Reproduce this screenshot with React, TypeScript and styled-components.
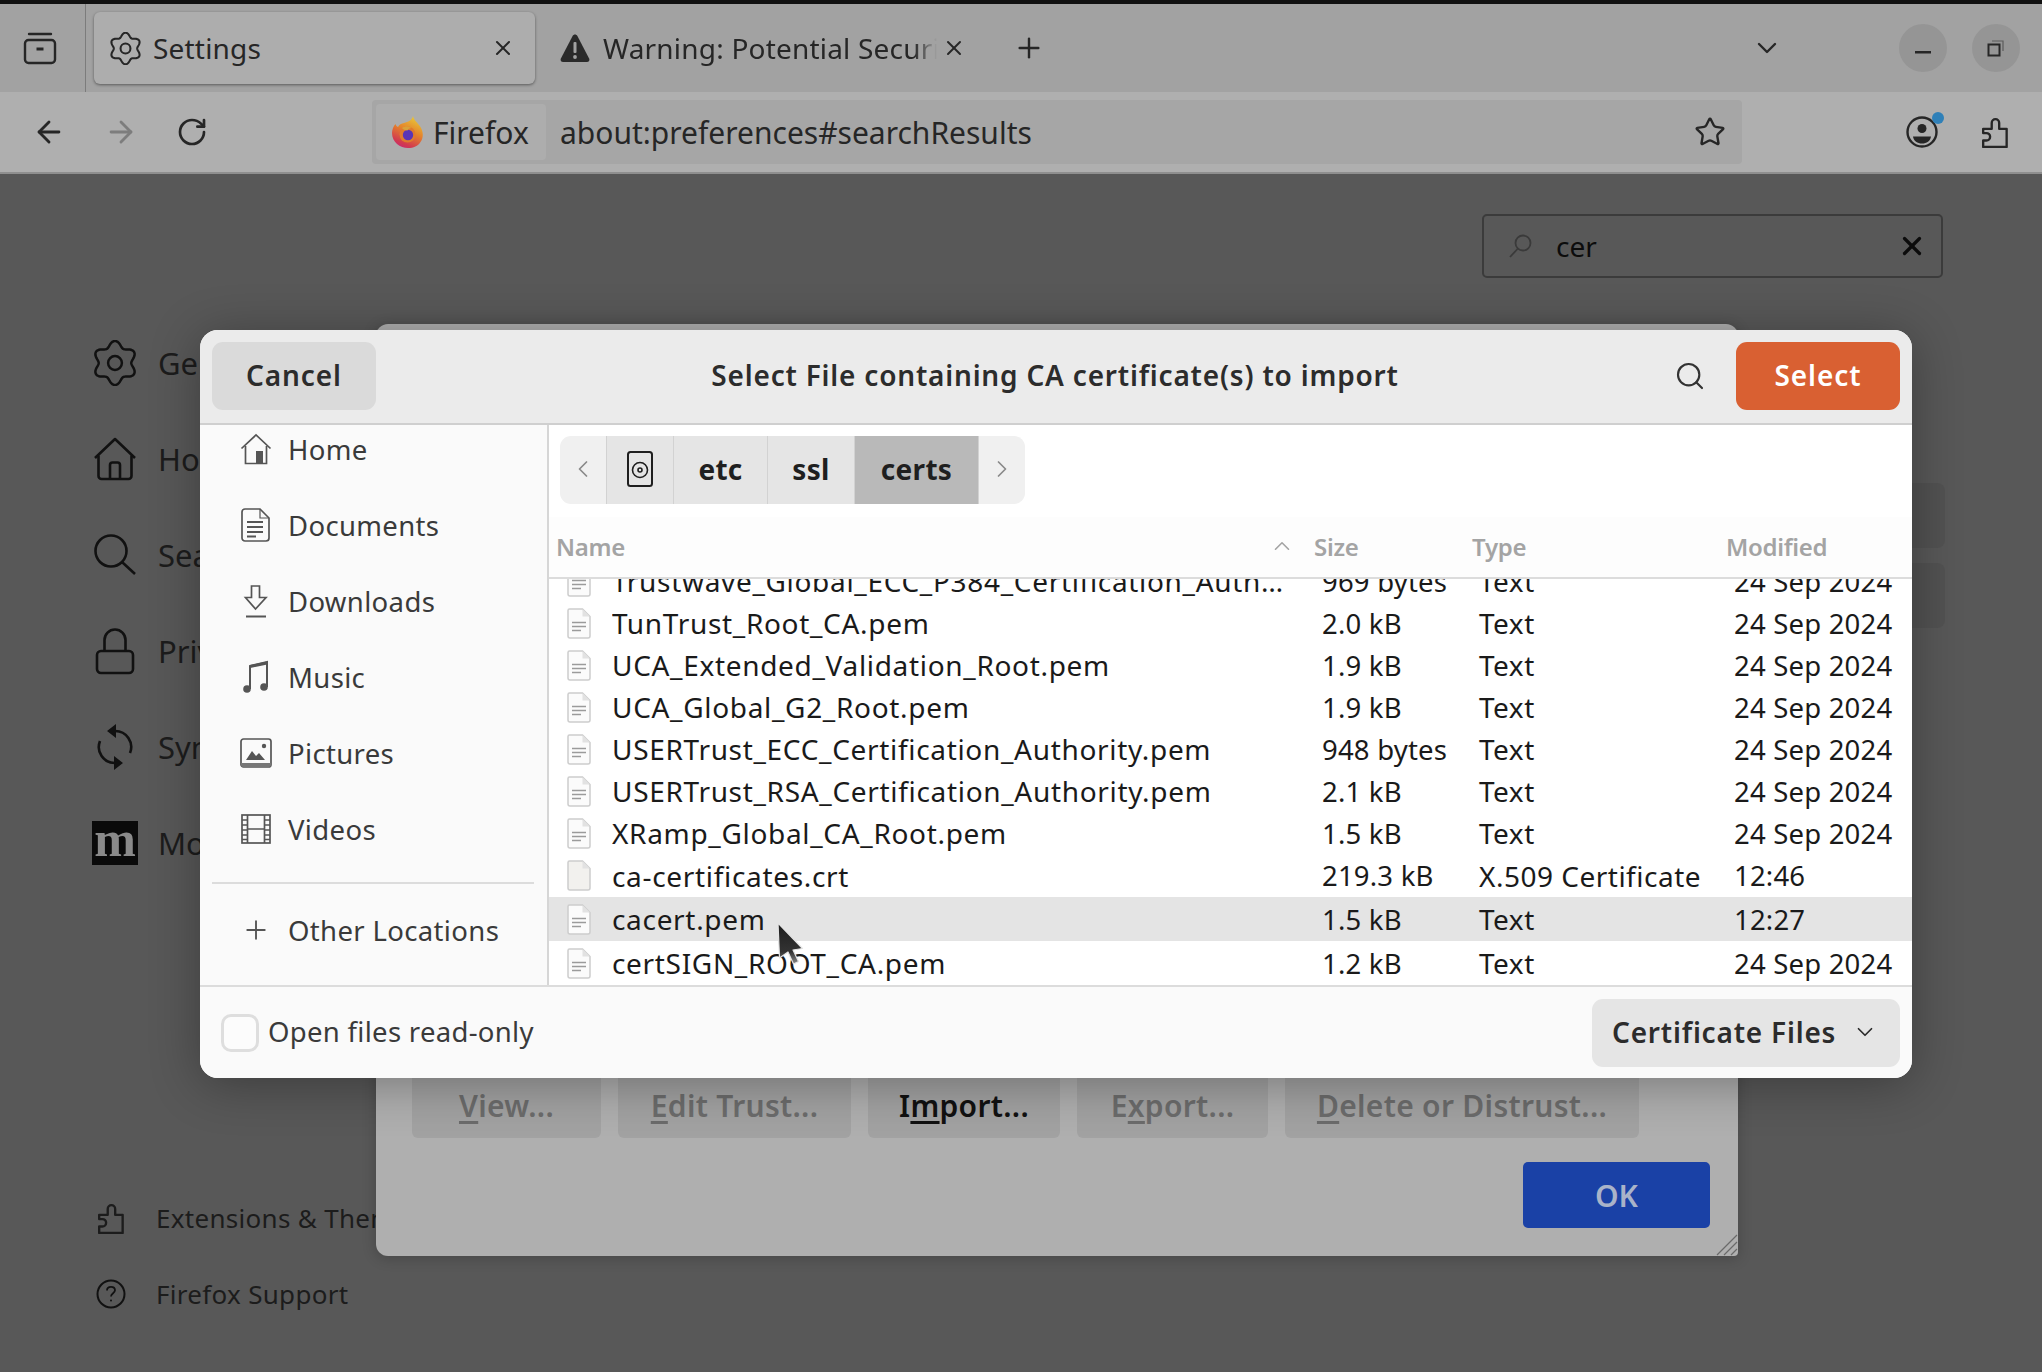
import React from "react";
import styled, { createGlobalStyle } from "styled-components";
import { ArrowLeft, ArrowRight, RotateCw, Star, Plus, X, ChevronDown, ChevronUp, ChevronLeft, ChevronRight, Search } from "lucide-react";

const FONT = `"Noto Sans", "Open Sans", sans-serif`;

const Global = createGlobalStyle`
  html, body { margin: 0; padding: 0; background: #585858; }
  * { box-sizing: border-box; }
  body { font-family: ${FONT}; }
`;

const Win = styled.div`
  position: relative;
  width: 2042px;
  height: 1372px;
  overflow: hidden;
  display: flex;
  flex-direction: column;
  background: #585858;
`;
const Strip = styled.div`height: 4px; background: #111;`;
const TabBar = styled.div`
  height: 88px;
  background: #a2a2a2;
  display: flex;
  align-items: center;
  color: #262626;
`;
const ViewBtn = styled.div`
  width: 86px;
  height: 88px;
  padding-right: 6px;
  border-right: 1px solid #7c7c7c;
  display: flex;
  align-items: center;
  justify-content: center;
`;
const ActiveTab = styled.div`
  margin-left: 8px;
  width: 441px;
  height: 72px;
  border-radius: 6px;
  background: #adadad;
  box-shadow: 0 1px 3px rgba(0, 0, 0, 0.45);
  display: flex;
  align-items: center;
  padding: 0 20px 0 15px;
  gap: 11px;
`;
const Tab = styled.div`
  margin-left: 25px;
  width: 406px;
  height: 72px;
  display: flex;
  align-items: center;
  gap: 13px;
`;
const TabLabel = styled.span<{ $fade?: boolean }>`
  flex: 1;
  font-size: 28px;
  letter-spacing: 0.2px;
  white-space: nowrap;
  overflow: hidden;
  ${(p) => p.$fade && `margin-right: -8px; mask-image: linear-gradient(90deg, #000 93%, transparent 100%);`}
`;
const NewTab = styled.div`margin-left: 47px; display: flex;`;
const TabRight = styled.div`
  margin-left: auto;
  display: flex;
  align-items: center;
  padding-right: 22px;
`;
const Circle = styled.div<{ $gap?: number }>`
  width: 48px;
  height: 48px;
  border-radius: 50%;
  background: #959595;
  margin-left: ${(p) => p.$gap ?? 0}px;
  display: flex;
  align-items: center;
  justify-content: center;
`;
const Toolbar = styled.div`
  height: 82px;
  background: #afafaf;
  border-bottom: 2px solid #8f8f8f;
  display: flex;
  align-items: center;
  color: #262626;
`;
const NavBtns = styled.div`
  width: 372px;
  display: flex;
  align-items: center;
  gap: 38px;
  padding-left: 32px;
`;
const UrlBar = styled.div`
  width: 1370px;
  height: 64px;
  border-radius: 4px;
  background: #a6a6a6;
  display: flex;
  align-items: center;
  padding: 0 16px 0 4px;
`;
const Identity = styled.div`
  width: 170px;
  height: 56px;
  border-radius: 4px;
  background: #adadad;
  display: flex;
  align-items: center;
  padding-left: 16px;
  gap: 9px;
  font-size: 30px;
`;
const UrlText = styled.span`
  flex: 1;
  margin-left: 14px;
  font-size: 30px;
`;
const ToolRight = styled.div`
  flex: 1;
  display: flex;
  justify-content: flex-end;
  align-items: center;
  gap: 43px;
  padding-right: 33px;
`;
const AccountWrap = styled.div`position: relative; display: flex;`;
const Dot = styled.span`
  position: absolute;
  right: -6px;
  top: -4px;
  width: 12px;
  height: 12px;
  border-radius: 50%;
  background: #2f80b8;
`;

const PageBody = styled.div`
  flex: 1;
  display: flex;
  min-height: 0;
  color: #1c1c1c;
`;
const Nav = styled.nav`
  width: 600px;
  display: flex;
  flex-direction: column;
  padding: 141px 0 40px 92px;
`;
const NavItem = styled.div`
  height: 96px;
  flex: none;
  display: flex;
  align-items: center;
  gap: 20px;
  font-size: 31px;
  white-space: nowrap;
`;
const NavIcon = styled.span`
  width: 46px;
  display: flex;
  justify-content: center;
  align-items: center;
  color: #111;
`;
const MozBadge = styled.span`
  width: 48px;
  height: 44px;
  background: #0a0a0a;
  color: #8a8a8a;
  font-family: "Liberation Serif", serif;
  font-weight: 700;
  font-size: 50px;
  line-height: 36px;
  display: flex;
  justify-content: center;
  overflow: hidden;
`;
const NavFoot = styled.div`margin-top: auto; padding-left: 4px;`;
const FootItem = styled.div`
  height: 76px;
  display: flex;
  align-items: center;
  gap: 30px;
  font-size: 26px;
  letter-spacing: 0.3px;
  white-space: nowrap;
`;
const FootIcon = styled.span`
  width: 30px;
  display: flex;
  justify-content: center;
`;
const PageMain = styled.main`
  flex: 1;
  display: flex;
  flex-direction: column;
  align-items: flex-end;
  padding: 40px 99px 0 0;
`;
const SearchBox = styled.div`
  width: 461px;
  height: 64px;
  border: 2px solid #3b3b3b;
  border-radius: 5px;
  display: flex;
  align-items: center;
  padding: 0 14px 0 24px;
  gap: 24px;
  font-size: 28px;
  color: #0c0c0c;
  span { flex: 1; }
`;
const GhostRow = styled.div<{ $top: number }>`
  width: 400px;
  height: 65px;
  margin: ${(p) => p.$top}px -2px 0 0;
  border-radius: 8px;
  background: #525252;
`;

const BackDialog = styled.section`
  position: absolute;
  left: 376px;
  top: 324px;
  width: 1362px;
  height: 932px;
  background: #afafaf;
  border-radius: 12px 12px 4px 12px;
  box-shadow: 0 2px 14px rgba(0, 0, 0, 0.22);
  display: flex;
  flex-direction: column;
  justify-content: flex-end;
  padding: 0 28px 28px 36px;
`;
const BackRow = styled.div`display: flex; gap: 17px;`;
const BackBtn = styled.div<{ $w: number; $on?: boolean }>`
  width: ${(p) => p.$w}px;
  height: 68px;
  padding-top: 2px;
  border-radius: 6px;
  background: #a2a2a2;
  color: ${(p) => (p.$on ? "#111" : "#6c6c6c")};
  font-size: 30px;
  font-weight: 600;
  letter-spacing: 0.3px;
  display: flex;
  align-items: center;
  justify-content: center;
  white-space: nowrap;
  u { text-decoration-thickness: 3px; text-underline-offset: 4px; white-space: pre; }
`;
const OkRow = styled.div`display: flex; justify-content: flex-end; margin-top: 24px;`;
const OkBtn = styled.div`
  width: 187px;
  height: 66px;
  border-radius: 5px;
  background: #1a41a6;
  color: #a9b3c9;
  font-size: 30px;
  font-weight: 600;
  display: flex;
  align-items: center;
  justify-content: center;
`;
const Grip = styled.svg`
  position: absolute;
  right: 0;
  bottom: 0;
`;

const FileDialog = styled.section`
  position: absolute;
  left: 200px;
  top: 330px;
  width: 1712px;
  height: 748px;
  border-radius: 18px;
  overflow: hidden;
  background: #fafafa;
  box-shadow: 0 6px 50px rgba(0, 0, 0, 0.32);
  display: flex;
  flex-direction: column;
  color: #242424;
`;
const Head = styled.header`
  height: 95px;
  flex: none;
  background: #ebebeb;
  border-bottom: 2px solid #cfcfcf;
  display: flex;
  align-items: center;
  padding: 0 12px 2px;
`;
const HeadBtn = styled.div<{ $primary?: boolean }>`
  width: 164px;
  height: 68px;
  padding-bottom: 2px;
  border-radius: 11px;
  background: ${(p) => (p.$primary ? "#d96032" : "#dadada")};
  color: ${(p) => (p.$primary ? "#fff" : "#2c2c2c")};
  font-size: 28px;
  font-weight: 600;
  letter-spacing: 0.9px;
  display: flex;
  align-items: center;
  justify-content: center;
`;
const Title = styled.h1`
  flex: 1;
  margin: 0;
  padding: 0 0 2px 66px;
  text-align: center;
  font-size: 28px;
  font-weight: 600;
  letter-spacing: 0.8px;
  color: #2c2c2c;
`;
const HeadSearch = styled.div`
  width: 44px;
  margin-right: 24px;
  display: flex;
  justify-content: center;
  color: #333;
`;
const Body = styled.div`flex: 1; display: flex; min-height: 0;`;
const Side = styled.aside`
  width: 349px;
  flex: none;
  background: #fafafa;
  border-right: 2px solid #d6d6d6;
  overflow: hidden;
`;
const SideList = styled.div`margin-top: -14px;`;
const SideItem = styled.div`
  height: 76px;
  display: flex;
  align-items: center;
  padding-left: 38px;
  gap: 15px;
  font-size: 27.5px;
  letter-spacing: 0.35px;
  color: #3a3a3a;
`;
const SideIcon = styled.span`
  width: 35px;
  display: flex;
  justify-content: center;
  color: #555;
`;
const SideSep = styled.div`
  height: 2px;
  margin: 15px 13px 8px 12px;
  background: #dcdcdc;
`;
const Main = styled.div`flex: 1; min-width: 0; display: flex; flex-direction: column; background: #fff;`;
const PathWrap = styled.div`height: 92px; flex: none; padding: 11px 0 0 11px;`;
const PathBar = styled.div`
  display: inline-flex;
  height: 68px;
  border-radius: 11px;
  overflow: hidden;
`;
const Crumb = styled.div<{ $w: number; $kind?: "arrow" | "on" }>`
  width: ${(p) => p.$w}px;
  height: 68px;
  padding-bottom: 2px;
  display: flex;
  align-items: center;
  justify-content: center;
  font-size: 28px;
  font-weight: 700;
  letter-spacing: 0.3px;
  color: ${(p) => (p.$kind === "arrow" ? "#8a8a8a" : "#1f1f1f")};
  background: ${(p) => (p.$kind === "arrow" ? "#f0f0f0" : p.$kind === "on" ? "#b9b9b9" : "#e5e5e5")};
  & + & { border-left: 1px solid #d2d2d2; }
`;
const ColHead = styled.div`
  height: 62px;
  flex: none;
  background: #fdfdfd;
  border-bottom: 2px solid #dcdcdc;
  display: grid;
  grid-template-columns: 758px 158px 254px 1fr;
  align-items: center;
  padding: 0 0 2px 7px;
  font-size: 24px;
  font-weight: 600;
  letter-spacing: -0.3px;
  color: #a4a4a4;
`;
const NameHead = styled.div`
  display: flex;
  align-items: center;
  justify-content: space-between;
  padding-right: 19px;
`;
const Rows = styled.div`
  flex: 1;
  min-height: 0;
  overflow: hidden;
  display: flex;
  flex-direction: column;
  justify-content: flex-end;
`;
const Row = styled.div<{ $h?: number; $sel?: boolean }>`
  flex: none;
  height: ${(p) => p.$h ?? 42}px;
  display: grid;
  grid-template-columns: 63px 710px 157px 255px 1fr;
  align-items: center;
  font-size: 27.5px;
  letter-spacing: 0.2px;
  color: #1a1a1a;
  white-space: nowrap;
  background: ${(p) => (p.$sel ? "#e4e4e4" : "transparent")};
`;
const RowIcon = styled.span`padding-left: 18px; display: flex;`;
const RowName = styled.span`
  overflow: hidden;
  text-overflow: ellipsis;
  padding-right: 36px;
  font-size: 28px;
  letter-spacing: 0.68px;
`;
const RowType = styled.span`
  font-size: 28px;
  letter-spacing: 0.5px;
`;
const Foot = styled.footer`
  height: 93px;
  flex: none;
  background: #fafafa;
  border-top: 2px solid #dcdcdc;
  display: flex;
  align-items: center;
  justify-content: space-between;
  padding: 0 12px 0 21px;
`;
const Check = styled.label`
  display: flex;
  align-items: center;
  gap: 9px;
  font-size: 27.5px;
  letter-spacing: 0.3px;
  color: #3a3a3a;
`;
const CheckText = styled.span`margin-top: -2px;`;
const Box = styled.span`
  width: 38px;
  height: 38px;
  border-radius: 10px;
  border: 3px solid #dedede;
  background: #fcfcfc;
`;
const Combo = styled.div`
  width: 308px;
  height: 68px;
  border-radius: 11px;
  background: #e5e5e5;
  display: flex;
  align-items: center;
  justify-content: space-between;
  padding: 0 22px 2px 20px;
  font-size: 28px;
  font-weight: 600;
  letter-spacing: 0.8px;
  white-space: nowrap;
  color: #2c2c2c;
`;
const Pointer = styled.svg`
  position: absolute;
  left: 776px;
  top: 922px;
`;

/* scalloped gear outline, computed once */
const gearPath = (() => {
  const pts: string[] = [];
  for (let i = 0; i < 180; i++) {
    const a = (i / 180) * Math.PI * 2;
    const r = 10 + 1.5 * Math.cos(6 * a);
    pts.push(`${(12 + r * Math.sin(a)).toFixed(2)} ${(12 - r * Math.cos(a)).toFixed(2)}`);
  }
  return "M" + pts.join("L") + "Z";
})();

const Gear = ({ s = 32, w = 1.6 }: { s?: number; w?: number }) => (
  <svg width={s} height={s} viewBox="0 0 24 24" fill="none" stroke="currentColor" strokeWidth={w}>
    <path d={gearPath} strokeLinejoin="round" />
    <circle cx="12" cy="12" r="3.6" />
  </svg>
);
const Ext = ({ s = 30 }: { s?: number }) => (
  <svg width={s * 0.87} height={s} viewBox="0 0 26 30" fill="none" stroke="currentColor" strokeWidth="2.2" strokeLinejoin="round">
    <path d="M2 12h8V6.5a3.5 3.5 0 0 1 7 0V12h7v17H2v-6h3a3.5 3.5 0 0 0 0-7H2z" />
  </svg>
);
const TabsIcon = () => (
  <svg width="34" height="34" viewBox="0 0 34 34" fill="none" stroke="#262626" strokeWidth="2.4">
    <rect x="2" y="9" width="30" height="23" rx="3.5" />
    <path d="M6 3h22" strokeLinecap="round" />
    <path d="M13.5 18h7" strokeWidth="3" />
  </svg>
);
const WarnIcon = () => (
  <svg width="30" height="30" viewBox="0 0 30 30">
    <path d="M15 1.5c1 0 1.8.5 2.4 1.5l11.700 22.500c.9 1.800-.2 3.500-2.200 3.500H3.100c-2 0-3.100-1.700-2.200-3.500L12.600 3c.6-1 1.400-1.500 2.400-1.500z" fill="#2a2a2a" />
    <rect x="13.5" y="9" width="3" height="11" rx="1" fill="#a2a2a2" />
    <circle cx="15" cy="24" r="1.9" fill="#a2a2a2" />
  </svg>
);
const FirefoxLogo = () => (
  <svg width="32" height="32" viewBox="0 0 32 32">
    <defs>
      <linearGradient id="ffa" x1="0.75" y1="0" x2="0.3" y2="1">
        <stop offset="0" stopColor="#e8cb3c" />
        <stop offset="0.45" stopColor="#e5842a" />
        <stop offset="0.85" stopColor="#d23a4f" />
        <stop offset="1" stopColor="#c72a70" />
      </linearGradient>
    </defs>
    <path d="M21 0c.5 4 5 7 7.500 11 3 5 3 11 0 15-2.500 4-7 6-12.500 6C8 32 0 26 0 17c0-3.500 1.500-7 3.500-9 .5 1.500 1.300 2.500 2.500 3 1-2.500 3.500-3.500 6-4 4-1 8-2.500 9-7z" fill="url(#ffa)" />
    <circle cx="15.500" cy="18.500" r="8" fill="#e07a2c" />
    <circle cx="16" cy="19" r="5.200" fill="#5a35b5" />
    <path d="M10 12c3-2 7-2 9.500 0-2 0-3.500 1-4 2.500-2.500 0-4.500-1-5.500-2.500z" fill="#d9a13a" />
  </svg>
);
const Account = () => (
  <svg width="32" height="32" viewBox="0 0 32 32" fill="none" stroke="#262626">
    <circle cx="16" cy="16" r="14.500" strokeWidth="2.400" />
    <circle cx="16" cy="12.500" r="4.500" fill="#262626" stroke="none" />
    <path d="M7 20.500h18c-.5 4.500-4.500 7-9 7s-8.500-2.500-9-7z" fill="#262626" stroke="none" />
  </svg>
);
const RestoreIcon = () => (
  <svg width="18" height="18" viewBox="0 0 18 18" fill="none" stroke="#262626" strokeWidth="2">
    <rect x="1.500" y="5.500" width="11" height="11" />
    <path d="M5 2h11v10" strokeWidth="1.200" stroke="#5c5c5c" />
  </svg>
);
const HelpIcon = () => (
  <svg width="30" height="30" viewBox="0 0 30 30" fill="none" stroke="#111" strokeWidth="2">
    <circle cx="15" cy="15" r="13.5" />
    <path d="M11 11.5c0-2.400 1.800-3.700 4-3.700s4 1.300 4 3.400c0 3-4 3-4 6.300" strokeWidth="1.8" />
    <circle cx="15" cy="21.500" r="1" fill="#111" stroke="none" />
  </svg>
);
const NavHome = () => (
  <svg width="44" height="44" viewBox="0 0 44 44" fill="none" stroke="#111" strokeWidth="2.600" strokeLinejoin="round">
    <path d="M2 21 22 2l20 19" />
    <path d="M5.500 18.500V39a3 3 0 0 0 3 3h27a3 3 0 0 0 3-3V18.500" />
    <path d="M17 42V28a2.500 2.500 0 0 1 2.500-2.500h5A2.500 2.500 0 0 1 27 28v14" />
  </svg>
);
const NavSearch = () => (
  <svg width="44" height="44" viewBox="0 0 44 44" fill="none" stroke="#111" strokeWidth="2.600">
    <circle cx="18" cy="18" r="15.500" />
    <path d="M29 29l13 12" />
  </svg>
);
const NavLock = () => (
  <svg width="40" height="48" viewBox="0 0 40 48" fill="none" stroke="#111" strokeWidth="2.600">
    <rect x="2" y="24" width="36" height="22" rx="4" />
    <path d="M9.500 24V13a10.500 10.500 0 0 1 21 0v11" />
  </svg>
);
const NavSync = () => (
  <svg width="36" height="48" viewBox="0 0 36 48" fill="none" stroke="#111" strokeWidth="2.600">
    <path d="M33 30A16 16 0 0 0 18 8" />
    <path d="M3 18A16 16 0 0 0 18 40" />
    <path d="M19 1l-9 7 9 7zM17 47l9-7-9-7z" fill="#111" stroke="none" />
  </svg>
);

const FileIco = ({ plain }: { plain?: boolean }) => (
  <svg width="24" height="31" viewBox="0 0 24 31">
    <path d="M2.500 1h13L23 8.500V28a2 2 0 0 1-2 2H3a2 2 0 0 1-2-2V2.500A1.500 1.500 0 0 1 2.500 1z" fill={plain ? "#f2f1ee" : "#fbfbfb"} stroke="#cdcdcd" strokeWidth="1.500" />
    <path d="M15.500 1v7.500H23z" fill="#e2e2e2" />
    {!plain && <path d="M5 14.500h14M5 18.500h14M5 22.500h9" stroke="#9b9b9b" strokeWidth="1.500" fill="none" />}
  </svg>
);
const SideHome = () => (
  <svg width="32" height="32" viewBox="0 0 32 32" fill="none" stroke="#555" strokeWidth="1.700">
    <path d="M1.500 15.500 16 2l14.500 13.500" />
    <path d="M5.500 13v17.500h21V13" />
    <rect x="16" y="18" width="7" height="12.500" fill="#555" stroke="none" />
  </svg>
);
const SideDoc = () => (
  <svg width="30" height="34" viewBox="0 0 30 34" fill="none" stroke="#555" strokeWidth="1.700">
    <path d="M4 1h15l9 9v20a3 3 0 0 1-3 3H4a3 3 0 0 1-3-3V4a3 3 0 0 1 3-3z" />
    <path d="M19 1v9h9" strokeWidth="1.200" />
    <path d="M6 14h16M6 19h16M6 24h16M6 28.500h9" strokeWidth="1.800" />
  </svg>
);
const SideDown = () => (
  <svg width="28" height="34" viewBox="0 0 28 34" fill="none" stroke="#555" strokeWidth="1.700">
    <path d="M9.500 2h8v11.500H24L13.500 25 3.500 13.500h6z" />
    <path d="M4 32.500h20" strokeWidth="2" />
  </svg>
);
const SideMusic = () => (
  <svg width="28" height="34" viewBox="0 0 28 34" fill="none" stroke="#555" strokeWidth="2">
    <path d="M8 29V6l17-4v25" />
    <path d="M8 6.500 25 3" strokeWidth="3" />
    <circle cx="5" cy="29" r="3.800" fill="#555" stroke="none" />
    <circle cx="22" cy="27" r="3.800" fill="#555" stroke="none" />
  </svg>
);
const SidePic = () => (
  <svg width="32" height="30" viewBox="0 0 32 30" fill="none">
    <rect x="1" y="1" width="30" height="28" rx="2.500" stroke="#555" strokeWidth="1.700" />
    <path d="M1 25h30v2a2 2 0 0 1-2 2H3a2 2 0 0 1-2-2z" fill="#777" />
    <path d="M6 22l6-9 4 5 3-3 6 7z" fill="#555" />
    <circle cx="24" cy="8" r="2.200" fill="#555" />
  </svg>
);
const SideVideo = () => (
  <svg width="30" height="30" viewBox="0 0 30 30" fill="none" stroke="#555" strokeWidth="1.700">
    <rect x="1" y="1" width="28" height="28" />
    <path d="M6.500 1v28M23.500 1v28M6.500 15h17" />
    <path d="M1 6h5M1 11h5M1 16h5M1 21h5M1 25.500h5M24 6h5M24 11h5M24 16h5M24 21h5M24 25.500h5" strokeWidth="1.400" />
  </svg>
);
const DiskIco = () => (
  <svg width="26" height="36" viewBox="0 0 26 36" fill="none" stroke="#1f1f1f" strokeWidth="2">
    <rect x="1" y="1" width="24" height="34" rx="2.500" />
    <circle cx="13" cy="19" r="7.500" strokeWidth="1.600" />
    <circle cx="13" cy="19" r="2" strokeWidth="1.600" />
  </svg>
);

const files = [
  ["Trustwave_Global_ECC_P384_Certification_Authority.pem", "969 bytes", "Text", "24 Sep 2024"],
  ["TunTrust_Root_CA.pem", "2.0 kB", "Text", "24 Sep 2024"],
  ["UCA_Extended_Validation_Root.pem", "1.9 kB", "Text", "24 Sep 2024"],
  ["UCA_Global_G2_Root.pem", "1.9 kB", "Text", "24 Sep 2024"],
  ["USERTrust_ECC_Certification_Authority.pem", "948 bytes", "Text", "24 Sep 2024"],
  ["USERTrust_RSA_Certification_Authority.pem", "2.1 kB", "Text", "24 Sep 2024"],
  ["XRamp_Global_CA_Root.pem", "1.5 kB", "Text", "24 Sep 2024"],
  ["ca-certificates.crt", "219.3 kB", "X.509 Certificate", "12:46"],
  ["cacert.pem", "1.5 kB", "Text", "12:27"],
  ["certSIGN_ROOT_CA.pem", "1.2 kB", "Text", "24 Sep 2024"],
];

const places: [string, React.ReactNode][] = [
  ["Home", <SideHome />],
  ["Documents", <SideDoc />],
  ["Downloads", <SideDown />],
  ["Music", <SideMusic />],
  ["Pictures", <SidePic />],
  ["Videos", <SideVideo />],
];

export default function App() {
  return (
    <Win>
      <Global />
      <Strip />
      <TabBar>
        <ViewBtn><TabsIcon /></ViewBtn>
        <ActiveTab>
          <Gear s={33} w={1.500} />
          <TabLabel>Settings</TabLabel>
          <X size={24} strokeWidth={2} />
        </ActiveTab>
        <Tab>
          <WarnIcon />
          <TabLabel $fade>Warning: Potential Security Risk Ahead</TabLabel>
          <X size={24} strokeWidth={2} />
        </Tab>
        <NewTab><Plus size={32} strokeWidth={1.800} /></NewTab>
        <TabRight>
          <ChevronDown size={32} strokeWidth={1.800} />
          <Circle $gap={116}><svg width="16" height="12"><rect width="16" height="2.500" y="9" fill="#262626" /></svg></Circle>
          <Circle $gap={25}><RestoreIcon /></Circle>
        </TabRight>
      </TabBar>
      <Toolbar>
        <NavBtns>
          <ArrowLeft size={34} strokeWidth={2} />
          <ArrowRight size={34} strokeWidth={2} color="#7d7d7d" />
          <RotateCw size={32} strokeWidth={2} />
        </NavBtns>
        <UrlBar>
          <Identity><FirefoxLogo />Firefox</Identity>
          <UrlText>about:preferences#searchResults</UrlText>
          <Star size={32} strokeWidth={1.800} />
        </UrlBar>
        <ToolRight>
          <AccountWrap><Account /><Dot /></AccountWrap>
          <Ext s={32} />
        </ToolRight>
      </Toolbar>
      <PageBody>
        <Nav>
          <NavItem><NavIcon><Gear s={46} w={1.300} /></NavIcon>General</NavItem>
          <NavItem><NavIcon><NavHome /></NavIcon>Home</NavItem>
          <NavItem><NavIcon><NavSearch /></NavIcon>Search</NavItem>
          <NavItem><NavIcon><NavLock /></NavIcon>Privacy &amp; Security</NavItem>
          <NavItem><NavIcon><NavSync /></NavIcon>Sync</NavItem>
          <NavItem><NavIcon><MozBadge>m</MozBadge></NavIcon>More from Mozilla</NavItem>
          <NavFoot>
            <FootItem><FootIcon><Ext s={32} /></FootIcon>Extensions &amp; Themes</FootItem>
            <FootItem><FootIcon><HelpIcon /></FootIcon>Firefox Support</FootItem>
          </NavFoot>
        </Nav>
        <PageMain>
          <SearchBox>
            <svg width="24" height="24" viewBox="0 0 24 24" fill="none" stroke="#3a3a3a" strokeWidth="1.800"><circle cx="15" cy="9" r="7.500" /><path d="M9.500 15 2 23" /></svg>
            <span>cer</span>
            <X size={30} strokeWidth={2.600} color="#0c0c0c" />
          </SearchBox>
          <GhostRow $top={205} />
          <GhostRow $top={15} />
        </PageMain>
      </PageBody>

      <BackDialog>
        <BackRow>
          <BackBtn $w={189}><span><u>V</u>iew...</span></BackBtn>
          <BackBtn $w={233}><span><u>E</u>dit Trust...</span></BackBtn>
          <BackBtn $w={192} $on><span>I<u>m</u>port...</span></BackBtn>
          <BackBtn $w={191}><span>E<u>x</u>port...</span></BackBtn>
          <BackBtn $w={354}><span><u>D</u>elete or Distrust...</span></BackBtn>
        </BackRow>
        <OkRow><OkBtn>OK</OkBtn></OkRow>
        <Grip width="22" height="22" viewBox="0 0 22 22" stroke="#6a6a6a" strokeWidth="1.200">
          <path d="M1 21 21 1M8 21 21 8M15 21l6-6" />
        </Grip>
      </BackDialog>

      <FileDialog>
        <Head>
          <HeadBtn>Cancel</HeadBtn>
          <Title>Select File containing CA certificate(s) to import</Title>
          <HeadSearch><Search size={32} strokeWidth={1.600} /></HeadSearch>
          <HeadBtn $primary>Select</HeadBtn>
        </Head>
        <Body>
          <Side>
            <SideList>
              {places.map(([n, i]) => (
                <SideItem key={n}><SideIcon>{i}</SideIcon>{n}</SideItem>
              ))}
              <SideSep />
              <SideItem><SideIcon><Plus size={30} strokeWidth={1.500} /></SideIcon>Other Locations</SideItem>
            </SideList>
          </Side>
          <Main>
            <PathWrap>
              <PathBar>
                <Crumb $w={46} $kind="arrow"><ChevronLeft size={28} strokeWidth={1.500} /></Crumb>
                <Crumb $w={67}><DiskIco /></Crumb>
                <Crumb $w={94}>etc</Crumb>
                <Crumb $w={87}>ssl</Crumb>
                <Crumb $w={124} $kind="on">certs</Crumb>
                <Crumb $w={47} $kind="arrow"><ChevronRight size={28} strokeWidth={1.500} /></Crumb>
              </PathBar>
            </PathWrap>
            <ColHead>
              <NameHead>Name<ChevronUp size={26} strokeWidth={1.500} /></NameHead>
              <span>Size</span>
              <span>Type</span>
              <span>Modified</span>
            </ColHead>
            <Rows>
              {files.map((f, i) => (
                <Row key={f[0]} $h={i === 7 ? 43 : i >= 8 ? 44 : 42} $sel={i === 8}>
                  <RowIcon><FileIco plain={i === 7} /></RowIcon>
                  <RowName>{f[0]}</RowName>
                  <span>{f[1]}</span>
                  <RowType>{f[2]}</RowType>
                  <span>{f[3]}</span>
                </Row>
              ))}
            </Rows>
          </Main>
        </Body>
        <Foot>
          <Check><Box /><CheckText>Open files read-only</CheckText></Check>
          <Combo>Certificate Files<ChevronDown size={26} strokeWidth={1.600} /></Combo>
        </Foot>
      </FileDialog>

      <Pointer width="28" height="44" viewBox="0 0 28 44">
        <defs>
          <linearGradient id="ptr" x1="0" y1="0" x2="0" y2="1">
            <stop offset="0" stopColor="#1c1c1c" />
            <stop offset="0.7" stopColor="#333" />
            <stop offset="1" stopColor="#888" />
          </linearGradient>
        </defs>
        <path d="M2 1l1.500 35L12 30l5.500 12 5-2.500L17 28l9.500-1.500z" fill="url(#ptr)" stroke="#e4e4e4" strokeWidth="1.200" strokeLinejoin="round" />
      </Pointer>
    </Win>
  );
}
